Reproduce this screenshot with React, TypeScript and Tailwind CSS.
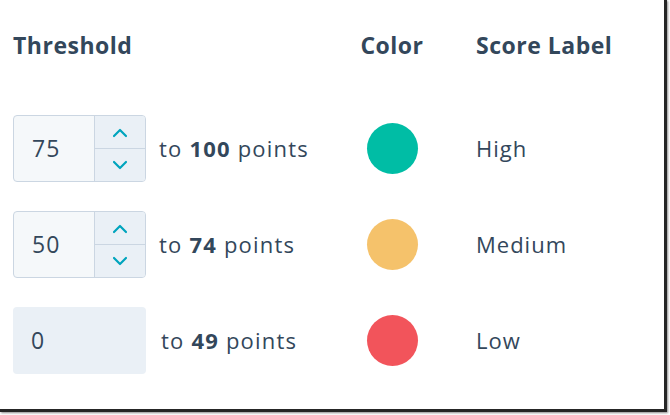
import { ReactNode } from "react"

type Row = {
  value: string
  to: string
  color: string
  label: string
  stepper: boolean
}

const rows: Row[] = [
  { value: "75", to: "100", color: "bg-[#00bda5]", label: "High", stepper: true },
  { value: "50", to: "74", color: "bg-[#f5c26b]", label: "Medium", stepper: true },
  { value: "0", to: "49", color: "bg-[#f2545b]", label: "Low", stepper: false },
]

function Chevron({ up }: { up?: boolean }) {
  return (
    <svg width="16" height="10" viewBox="0 0 16 10" fill="none">
      <path
        d={up ? "M2 8 L8 2 L14 8" : "M2 2 L8 8 L14 2"}
        stroke="#00a4bd"
        strokeWidth="2.2"
        strokeLinecap="round"
        strokeLinejoin="round"
      />
    </svg>
  )
}

function NumberInput({ value, stepper }: { value: string; stepper: boolean }) {
  if (!stepper) {
    return (
      <div className="w-[133px] h-[67px] rounded-[4px] bg-[#eaf0f6] flex items-center pl-[18px] text-[23px] tracking-[1px]">
        {value}
      </div>
    )
  }
  return (
    <div className="w-[133px] h-[67px] rounded-[4px] border border-[#cbd6e2] bg-[#f5f8fa] flex overflow-hidden">
      <div className="w-[80px] flex items-center pl-[18px] text-[23px] tracking-[1px]">{value}</div>
      <div className="flex-1 flex flex-col border-l border-[#cbd6e2] bg-[#eaf0f6]">
        <div className="flex-1 flex items-center justify-center border-b border-[#cbd6e2] pt-[1px]">
          <Chevron up />
        </div>
        <div className="flex-1 flex items-center justify-center pb-[1px]">
          <Chevron />
        </div>
      </div>
    </div>
  )
}

function Header({ children, className }: { children: ReactNode; className: string }) {
  return (
    <div className={`text-[23px] font-bold leading-[30px] tracking-[0.5px] whitespace-nowrap ${className}`}>
      {children}
    </div>
  )
}

export default function App() {
  return (
    <div className="w-[670px] h-[415px] bg-white">
      <div
        className="w-[667px] h-[412px] bg-white border-r-[3px] border-b-[3px] border-[#262626] shadow-[1px_1px_2px_rgba(0,0,0,0.45)] text-[#33475b] pl-[13px] pt-[30px]"
        style={{ fontFamily: "'Open Sans', Lato, sans-serif" }}
      >
        <div className="flex">
          <Header className="w-[348px]">Threshold</Header>
          <Header className="w-[62px] flex justify-center">Color</Header>
          <Header className="ml-[53px]">Score Label</Header>
        </div>

        <div className="flex flex-col gap-[29px] mt-[55px]">
          {rows.map((row) => (
            <div key={row.value} className="flex items-center h-[67px]">
              <div className="w-[348px] flex items-center">
                <NumberInput value={row.value} stepper={row.stepper} />
                <div
                  className={`text-[22px] tracking-[1.2px] whitespace-nowrap ${
                    row.stepper ? "ml-[13px]" : "ml-[15px]"
                  }`}
                >
                  to <span className="font-bold">{row.to}</span> points
                </div>
              </div>
              <div className="w-[62px] flex justify-center">
                <div className={`w-[51px] h-[51px] rounded-full ${row.color}`} />
              </div>
              <div className="ml-[53px] text-[22px] tracking-[1px]">{row.label}</div>
            </div>
          ))}
        </div>
      </div>
    </div>
  )
}
